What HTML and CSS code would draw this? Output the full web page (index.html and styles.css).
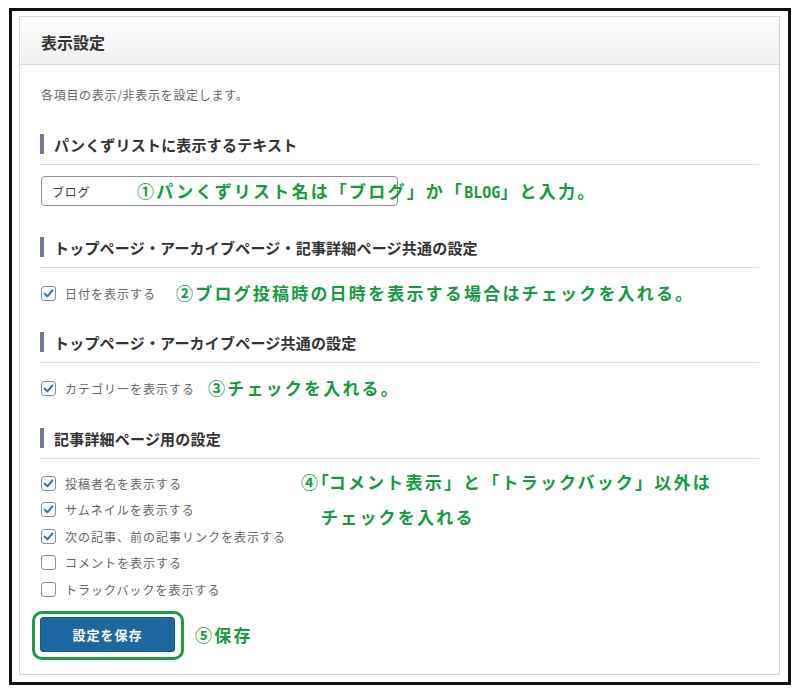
FILE: index.html
```html
<!DOCTYPE html>
<html lang="ja">
<head>
<meta charset="utf-8">
<title>表示設定</title>
<link rel="stylesheet" href="styles.css">
</head>
<body>
<div class="frame">
  <div class="panel">
    <div class="panel-head"><h2 class="panel-title">表示設定</h2></div>
    <div class="panel-body">
      <p class="desc">各項目の表示/非表示を設定します。</p>

      <section class="sec sec-first">
        <h3 class="sec-title">パンくずリストに表示するテキスト</h3>
        <div class="field">
          <input class="text-input" type="text" value="ブログ">
          <p class="note note-1">①パンくずリスト名は「ブログ」か「<span class="mono">BLOG</span>」と入力。</p>
        </div>
      </section>

      <section class="sec">
        <h3 class="sec-title">トップページ・アーカイブページ・記事詳細ページ共通の設定</h3>
        <div class="checks">
          <div class="check">
            <span class="cb"><svg viewBox="0 0 15 15" width="15" height="15"><path d="M3.6 7.6 L6.4 10.3 L11.4 4.4" fill="none" stroke="#2b72b4" stroke-width="2" stroke-linecap="round" stroke-linejoin="round"/></svg></span>
            <span class="lbl">日付を表示する</span>
            <span class="note note-2">②ブログ投稿時の日時を表示する場合はチェックを入れる。</span>
          </div>
        </div>
      </section>

      <section class="sec">
        <h3 class="sec-title">トップページ・アーカイブページ共通の設定</h3>
        <div class="checks">
          <div class="check">
            <span class="cb"><svg viewBox="0 0 15 15" width="15" height="15"><path d="M3.6 7.6 L6.4 10.3 L11.4 4.4" fill="none" stroke="#2b72b4" stroke-width="2" stroke-linecap="round" stroke-linejoin="round"/></svg></span>
            <span class="lbl">カテゴリーを表示する</span>
            <span class="note note-3">③チェックを入れる。</span>
          </div>
        </div>
      </section>

      <section class="sec sec-last">
        <h3 class="sec-title">記事詳細ページ用の設定</h3>
        <div class="sec4-body">
          <div class="checks checks-list">
            <div class="check">
              <span class="cb"><svg viewBox="0 0 15 15" width="15" height="15"><path d="M3.6 7.6 L6.4 10.3 L11.4 4.4" fill="none" stroke="#2b72b4" stroke-width="2" stroke-linecap="round" stroke-linejoin="round"/></svg></span>
              <span class="lbl">投稿者名を表示する</span>
            </div>
            <div class="check">
              <span class="cb"><svg viewBox="0 0 15 15" width="15" height="15"><path d="M3.6 7.6 L6.4 10.3 L11.4 4.4" fill="none" stroke="#2b72b4" stroke-width="2" stroke-linecap="round" stroke-linejoin="round"/></svg></span>
              <span class="lbl">サムネイルを表示する</span>
            </div>
            <div class="check">
              <span class="cb"><svg viewBox="0 0 15 15" width="15" height="15"><path d="M3.6 7.6 L6.4 10.3 L11.4 4.4" fill="none" stroke="#2b72b4" stroke-width="2" stroke-linecap="round" stroke-linejoin="round"/></svg></span>
              <span class="lbl">次の記事、前の記事リンクを表示する</span>
            </div>
            <div class="check">
              <span class="cb"></span>
              <span class="lbl">コメントを表示する</span>
            </div>
            <div class="check">
              <span class="cb"></span>
              <span class="lbl">トラックバックを表示する</span>
            </div>
          </div>
          <p class="note note-4">④<span class="tight">「</span>コメント表示」と「トラックバック」以外は<span class="l2">チェックを入れる</span></p>
        </div>
      </section>

      <div class="actions">
        <div class="btn-wrap"><button class="btn" type="button">設定を保存</button></div>
        <span class="note note-5">⑤保存</span>
      </div>
    </div>
  </div>
</div>
</body>
</html>
```

FILE: styles.css
```css
body {
  margin: 0;
  background: #fff;
  font-family: "Noto Sans CJK JP", "Noto Sans", sans-serif;
}

.frame {
  margin: 8px 0 0 9px;
  width: 782px;
  height: 677px;
  box-sizing: border-box;
  border: 3px solid #111;
  padding: 5px 8px 7px 7px;
}

.panel {
  height: 100%;
  box-sizing: border-box;
  border: 1px solid #d6d6d6;
  background: #fff;
}

.panel-head {
  height: 44px;
  padding: 3px 0 0 21px;
  display: flex;
  align-items: center;
  border-bottom: 1px solid #dcdcdc;
  background: linear-gradient(#fefefe, #f0f0f0);
}

.panel-title {
  margin: 0;
  font-size: 16px;
  font-weight: 700;
  color: #333;
}

.panel-body {
  padding: 21px 20px 20px 20px;
}

.desc {
  margin: 0 0 0 1px;
  font-size: 12px;
  line-height: 18px;
  letter-spacing: 0.7px;
  color: #666;
}

.sec {
  margin-top: 31px;
}

.sec-first {
  margin-top: 30px;
}

.sec-last {
  margin-top: 32px;
}

.sec-title {
  margin: 0;
  height: 20px;
  padding-bottom: 10px;
  display: flex;
  align-items: center;
  gap: 10px;
  border-bottom: 1px solid #dcdcdc;
  font-size: 15px;
  font-weight: 700;
  letter-spacing: 0.2px;
  color: #333;
}

.sec-title::before {
  content: "";
  flex: none;
  width: 4px;
  height: 20px;
  background: #707c93;
}

.field {
  position: relative;
  margin-top: 11px;
}

.text-input {
  display: block;
  box-sizing: border-box;
  width: 357px;
  height: 30px;
  margin: 0 0 0 1px;
  padding: 0 10px;
  border: 1px solid #8c8f94;
  border-radius: 4px;
  background: #fff;
  font-family: "Noto Sans CJK JP", sans-serif;
  font-size: 12px;
  letter-spacing: 0.7px;
  color: #444;
}

.note {
  margin: 0;
  white-space: nowrap;
  font-size: 17px;
  font-weight: 700;
  line-height: 24px;
  letter-spacing: 2.2px;
  color: #169a3f;
}

.mono {
  font-family: "DejaVu Sans Mono", monospace;
  font-size: 15px;
  letter-spacing: 0;
}

.note-1 {
  position: absolute;
  left: 97px;
  top: 3px;
}

.checks {
  margin-top: 17px;
  display: flex;
  flex-direction: column;
  gap: 10.5px;
}

.check {
  display: flex;
  align-items: center;
  height: 16px;
  margin-left: 1px;
  font-size: 12px;
  letter-spacing: 1px;
  color: #666;
}

.cb {
  flex: none;
  width: 15px;
  height: 15px;
  box-sizing: border-box;
  margin-right: 9px;
  border: 1px solid #8c8f94;
  border-radius: 3px;
  background: #fff;
  display: flex;
  align-items: center;
  justify-content: center;
}

.cb svg {
  display: block;
  flex: none;
}

.note-2 {
  margin-left: 20px;
}

.note-3 {
  margin-left: 13px;
}

.sec4-body {
  margin-top: 16px;
  display: flex;
  align-items: flex-start;
}

.checks-list {
  margin-top: 0;
  width: 261px;
  flex: none;
}

.note-4 {
  margin-top: -11.5px;
  line-height: 35px;
}

.tight {
  font-feature-settings: "halt";
  letter-spacing: 0;
}

.l2 {
  display: block;
  padding-left: 20px;
}

.actions {
  margin-top: 20px;
  display: flex;
  align-items: center;
}

.btn-wrap {
  position: relative;
  flex: none;
}

.btn-wrap::before {
  content: "";
  position: absolute;
  top: -6px;
  left: -8px;
  right: -9px;
  bottom: -8px;
  border: 3px solid #1d9a45;
  border-radius: 10px;
}

.btn {
  display: block;
  width: 135px;
  height: 35px;
  border: 1px solid #175b8e;
  border-radius: 3px;
  background: #1f67a0;
  color: #fff;
  font-family: "Noto Sans CJK JP", sans-serif;
  font-size: 13px;
  font-weight: 700;
  letter-spacing: 1px;
}

.note-5 {
  margin-left: 20px;
}
```
